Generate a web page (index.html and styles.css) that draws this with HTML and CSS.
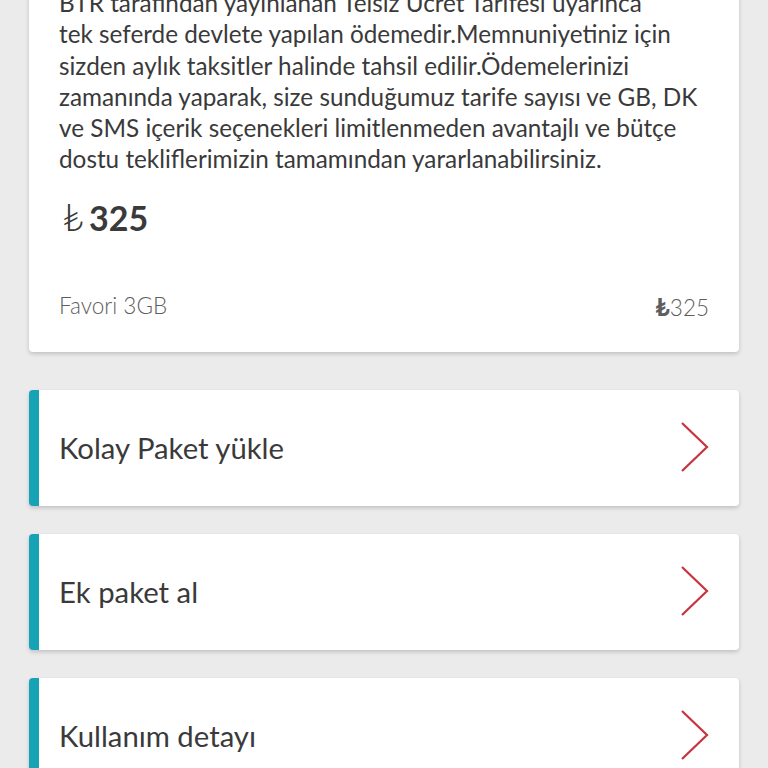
FILE: index.html
```html
<!DOCTYPE html>
<html lang="tr">
<head>
<meta charset="utf-8">
<link rel="stylesheet" href="styles.css">
</head>
<body>
<div class="page">
  <div class="card info">
    <p class="desc">BTR tarafından yayınlanan Telsiz Ücret Tarifesi uyarınca<br>tek seferde devlete yapılan ödemedir.Memnuniyetiniz için<br>sizden aylık taksitler halinde tahsil edilir.Ödemelerinizi<br>zamanında yaparak, size sunduğumuz tarife sayısı ve GB, DK<br>ve SMS içerik seçenekleri limitlenmeden avantajlı ve bütçe<br>dostu tekliflerimizin tamamından yararlanabilirsiniz.</p>
    <div class="price"><span class="cur">₺</span>325</div>
    <div class="foot"><span>Favori 3GB</span><span class="foot-price"><span class="cur2">₺</span>325</span></div>
  </div>
  <a class="card link">
    <span class="label">Kolay Paket yükle</span>
    <svg class="chev" width="30" height="54" viewBox="0 0 30 54"><path d="M2 2 L27 26 L2 50" fill="none" stroke="#c9323e" stroke-width="2.2"/></svg>
  </a>
  <a class="card link">
    <span class="label">Ek paket al</span>
    <svg class="chev" width="30" height="54" viewBox="0 0 30 54"><path d="M2 2 L27 26 L2 50" fill="none" stroke="#c9323e" stroke-width="2.2"/></svg>
  </a>
  <a class="card link">
    <span class="label">Kullanım detayı</span>
    <svg class="chev" width="30" height="54" viewBox="0 0 30 54"><path d="M2 2 L27 26 L2 50" fill="none" stroke="#c9323e" stroke-width="2.2"/></svg>
  </a>
</div>
</body>
</html>
```
FILE: styles.css
```css
html, body {
  margin: 0;
  padding: 0;
  background: #ebebeb;
  font-family: Lato, "Noto Sans", sans-serif;
  color: #3a3a3a;
}
.page {
  padding: 0 29px 40px;
  display: flex;
  flex-direction: column;
  gap: 28px;
  margin-top: -33px;
}
.card {
  background: #fff;
  border-radius: 4px;
  box-shadow: 0 2px 4px rgba(0,0,0,0.18);
}
.info {
  padding: 20px 30px 29px;
  margin-bottom: 10px;
}
.desc {
  margin: 0;
  font-size: 24.3px;
  line-height: 31.3px;
  color: #3a3a3a;
}
.price {
  margin-top: 21px;
  font-size: 34px;
  line-height: 41px;
  font-weight: 700;
  color: #3a3a3a;
  display: flex;
  align-items: baseline;
  gap: 5px;
  padding-left: 3px;
}
.price .cur {
  font-weight: 300;
  font-size: 38px;
}
.foot {
  margin-top: 53px;
  display: flex;
  justify-content: space-between;
  font-size: 22.5px;
  line-height: 30px;
  color: #5e5e5e;
  font-weight: 300;
}
.cur2 { font-weight: 700; font-size: 25px; }
.link {
  height: 116px;
  display: flex;
  align-items: center;
  justify-content: space-between;
  border-left: 10px solid #16a3b6;
  padding: 0 29px 0 20px;
  text-decoration: none;
}
.label {
  font-size: 29.3px;
  color: #3a3a3a;
}
.chev { display: block; }
```
